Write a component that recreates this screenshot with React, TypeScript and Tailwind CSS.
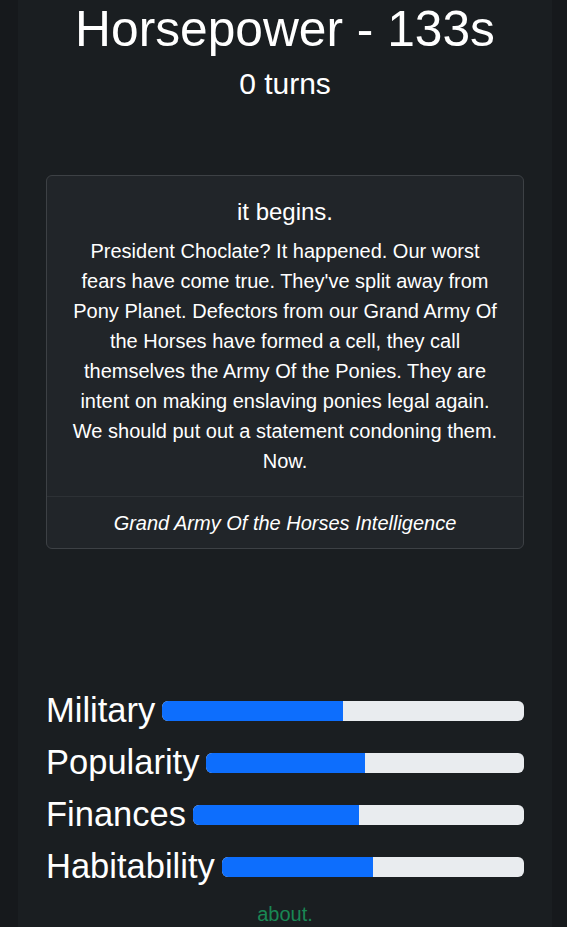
const stats = [
  { name: "Military", value: 50 },
  { name: "Popularity", value: 50 },
  { name: "Finances", value: 50 },
  { name: "Habitability", value: 50 },
]

function StatBar({ name, value }: { name: string; value: number }) {
  return (
    <div className="flex items-center leading-[1.5]">
      <span className="text-[34.5px] text-white whitespace-nowrap">{name}</span>
      <div className="ml-[7px] flex h-5 flex-1 overflow-hidden rounded-[6px] bg-[#e9ecef]">
        <div className="h-full bg-[#0d6efd]" style={{ width: `${value}%` }} />
      </div>
    </div>
  )
}

export default function App() {
  return (
    <div
      className="min-h-[927px] bg-[#16191c] text-white"
      style={{ fontFamily: '"Liberation Sans", Arial, sans-serif' }}
    >
      <div className="mx-[18px] mr-[15px] min-h-[927px] bg-[#1a1e21] px-[28px] pb-6 text-center">
        <h1 className="text-[49.7px] leading-[1.2] font-normal">Horsepower - 133s</h1>
        <h3 className="mt-[6px] text-[30px] leading-[1.2] font-normal">0 turns</h3>

        {/* event card */}
        <div className="mt-[73px] rounded-[6px] border border-[#3d4145] bg-[#212529]">
          <div className="px-5 pt-[22px] pb-5">
            <h4 className="mb-[10px] text-[24px] leading-[1.2]">it begins.</h4>
            <p className="text-[20px] leading-[30px]">
              President Choclate? It happened. Our worst fears have come true. They've split away from
              Pony Planet. Defectors from our Grand Army Of the Horses have formed a cell, they call
              themselves the Army Of the Ponies. They are intent on making enslaving ponies legal again.
              We should put out a statement condoning them. Now.
            </p>
          </div>
          <div className="border-t border-[#2d3135] pt-[11px] pb-[10px] text-[20px] leading-[30px] italic">
            Grand Army Of the Horses Intelligence
          </div>
        </div>

        {/* stats */}
        <div className="mt-[136px] flex flex-col text-left">
          {stats.map((s) => (
            <StatBar key={s.name} name={s.name} value={s.value} />
          ))}
        </div>

        <a className="mt-[7px] inline-block text-[20px] leading-[30px] text-[#198754]">about.</a>
      </div>
    </div>
  )
}
